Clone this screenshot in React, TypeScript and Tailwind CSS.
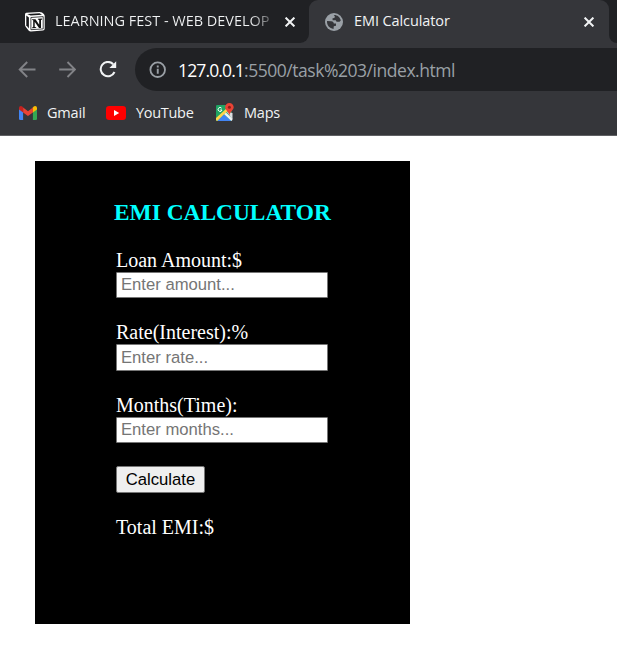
import React from "react";

function NotionIcon() {
  return (
    <svg width="22" height="22" viewBox="0 0 22 22" className="shrink-0">
      <path d="M2.3 1.8 L15.5 .9 Q17 .9 18 1.6 L19.8 3 Q20.7 3.8 20.7 5 V17.6 Q20.7 19.4 18.9 19.6 L7 20.5 Q5.6 20.6 4.8 19.7 L2 16.3 Q1 15.2 1 13.8 V3.5 Q1 2 2.3 1.8Z" fill="#fff" />
      <path d="M3.2 3 L15.6 2.2 L18 3.7 L6.6 4.5Z" fill="#17181b" />
      <path d="M2.3 4.4 L4.9 6.4 V17.4 L2.3 14.2Z" fill="#17181b" />
      <path d="M6.9 6.5 L19.2 5.6 V17.9 L6.9 18.7Z" fill="#fff" stroke="#17181b" strokeWidth=".8" />
      <path d="M8.1 8.2 h3.4 l3.7 5.6 V9 l-1.3-.4 V7.8 l4.2-.2 v.9 l-1.1.4 V17 h-2 l-4.3-6.3 v5.2 l1.5.4 v.8 l-4.1.2 v-.9 l1.1-.4 V9.3 l-1.1-.3Z" fill="#111" />
    </svg>
  );
}

function GlobeIcon() {
  return (
    <svg width="18" height="18" viewBox="0 0 18 18" className="shrink-0">
      <circle cx="9" cy="9" r="9" fill="#9aa0a6" />
      <path d="M8.8 2 C12.2 1.8 15 4 15.8 7.4 L14.5 8.8 L11.6 8.7 L10.7 7.3 L7.7 7.2 L7.4 5.4 L9.6 4.7 L9.8 3.3Z M2 8.1 L6.3 8.2 C8 8.3 8.7 9.2 8.8 10.5 H11 V12.8 L8.8 13.3 L8.5 15.9 C4.6 15.8 1.7 12.2 2 8.1Z" fill="#35363a" />
    </svg>
  );
}

function CloseIcon() {
  return (
    <svg width="10" height="10" viewBox="0 0 10 10" className="shrink-0">
      <path d="M.6 .6 L9.4 9.4 M9.4 .6 L.6 9.4" stroke="#f1f3f4" strokeWidth="2" />
    </svg>
  );
}

function BackIcon() {
  return (
    <svg width="18" height="18" viewBox="0 0 18 18">
      <path d="M17.5 8.5 H2 M9.2 1 L1.7 8.5 L9.2 16" fill="none" stroke="#828387" strokeWidth="1.9" />
    </svg>
  );
}

function ForwardIcon() {
  return (
    <svg width="18" height="18" viewBox="0 0 18 18">
      <path d="M1.2 8.5 H16.7 M9.5 1 L17 8.5 L9.5 16" fill="none" stroke="#828387" strokeWidth="1.9" />
    </svg>
  );
}

function ReloadIcon() {
  return (
    <svg width="18" height="18" viewBox="0 0 18 18">
      <path d="M15.5 11 A7.2 7.2 0 1 1 14.2 3.2" fill="none" stroke="#f1f3f4" strokeWidth="2" />
      <path d="M17.2 .3 V7.1 H10.4Z" fill="#f1f3f4" />
    </svg>
  );
}

function InfoIcon() {
  return (
    <svg width="18" height="18" viewBox="0 0 18 18">
      <circle cx="8.7" cy="8.7" r="7.3" fill="none" stroke="#9aa0a6" strokeWidth="1.8" />
      <path d="M7.8 7.8 h1.9 v5 h-1.9Z M7.8 4.6 h1.9 v1.9 h-1.9Z" fill="#9aa0a6" />
    </svg>
  );
}

function GmailIcon() {
  return (
    <svg width="18" height="14" viewBox="0 0 18 14">
      <path d="M0 2.2 L4.1 5 V14 H1.3 Q0 14 0 12.7Z" fill="#4285f4" />
      <path d="M18 2.2 L13.9 5 V14 H16.7 Q18 14 18 12.7Z" fill="#34a853" />
      <path d="M4.1 1.5 L9 5.2 L13.9 1.5 V6.4 L9 10.1 L4.1 6.4Z" fill="#ea4335" />
      <path d="M0 2 Q0 0 1.9 0 Q2.6 0 3.3 .6 L4.1 1.5 V6.4 L0 3.4Z" fill="#c5221f" />
      <path d="M18 2 Q18 0 16.1 0 Q15.4 0 14.7 .6 L13.9 1.5 V6.4 L18 3.4Z" fill="#fbbc04" />
    </svg>
  );
}

function YouTubeIcon() {
  return (
    <svg width="20" height="14" viewBox="0 0 20 14">
      <rect width="20" height="14" rx="3.2" fill="#f00" />
      <path d="M8 4 L13.2 7 L8 10Z" fill="#fff" />
    </svg>
  );
}

function MapsIcon() {
  return (
    <svg width="18" height="19" viewBox="0 0 18 19">
      <path d="M1.2 2 H15.5 V18 H1.2 Q0 18 0 16.8 V3.2 Q0 2 1.2 2Z" fill="#1fa463" />
      <path d="M10.5 8.5 L16.5 10 V16.5Z" fill="#dadce0" />
      <path d="M0 15 L11 5 L12.8 7 L1.4 18 Q0 18 0 16.8Z" fill="#ffd54b" />
      <path d="M8.2 11.2 L15.4 18 H1.4Z" fill="#4285f4" />
      <path d="M8.2 11.2 L10 9.5 L16.4 15.8 V17 L15.4 18Z" fill="#f1f3f4" />
      <path d="M5.6 5.2 A2 2 0 1 0 6 7 H4.2" fill="none" stroke="#fff" strokeWidth="1" />
      <path d="M13.4 0 A4.3 4.3 0 0 1 17.7 4.3 C17.7 7 14 8.5 13.4 12.8 C12.8 8.5 9.1 7 9.1 4.3 A4.3 4.3 0 0 1 13.4 0Z" fill="#e94335" />
      <circle cx="13.4" cy="4.3" r="1.5" fill="#8c1d18" />
    </svg>
  );
}

function Field({ label, hint, tall }: { label: string; hint: string; tall?: boolean }) {
  return (
    <div className="flex flex-col">
      <label className="h-[23px] text-[20px] leading-[23px] whitespace-nowrap text-white">{label}</label>
      <input
        placeholder={hint}
        className={
          "w-[212px] rounded-[1px] border border-[#767676] bg-white px-[4px] font-['Liberation_Sans',Arial,sans-serif] text-[16.67px] leading-[20px] text-black placeholder:text-[#757575] " +
          (tall ? "h-[27px]" : "h-[26px]")
        }
      />
    </div>
  );
}

export default function App() {
  return (
    <div className="flex h-[657px] w-[617px] flex-col overflow-hidden bg-white font-['Open_Sans','Noto_Sans',sans-serif]">
      <div className="flex h-[43px] bg-[#202124] text-[14.5px] leading-[18px] text-[#f1f3f4]">
        <div className="h-[43px] w-[309px] bg-[#35363a]">
          <div className="flex h-[43px] items-center rounded-br-[9px] bg-[#202124] pl-[24px]">
            <NotionIcon />
            <span className="ml-[9px] w-[217px] bg-linear-to-r from-[#f1f3f4] from-90% to-[#f1f3f4]/25 bg-clip-text pb-[2px] tracking-[-0.02px] whitespace-nowrap text-transparent">
              LEARNING FEST - WEB DEVELOP
            </span>
            <span className="ml-[13px]"><CloseIcon /></span>
          </div>
        </div>
        <div className="flex h-[43px] w-[300px] items-center rounded-t-[9px] bg-[#35363a] pl-[16px]">
          <GlobeIcon />
          <span className="ml-[11px] pb-[2px] tracking-[-0.1px] whitespace-nowrap">EMI Calculator</span>
          <span className="mr-[15px] ml-auto"><CloseIcon /></span>
        </div>
        <div className="h-[43px] flex-1 bg-[#35363a]">
          <div className="h-[10px] bg-[#202124]" />
          <div className="h-[33px] rounded-bl-[9px] bg-[#202124]" />
        </div>
      </div>

      <div className="flex h-[53px] items-center bg-[#35363a] pl-[18px]">
        <BackIcon />
        <span className="ml-[22px]"><ForwardIcon /></span>
        <span className="ml-[23px]"><ReloadIcon /></span>
        <div className="ml-[18px] flex h-[43px] flex-1 items-center rounded-l-full bg-[#202124] pl-[14px]">
          <InfoIcon />
          <span className="ml-[11px] text-[17.5px] leading-[24px] tracking-[-0.46px] whitespace-nowrap text-[#9aa0a6]">
            <span className="tracking-[-0.87px] text-white">127.0.0.1</span>:5500/task%203/index.html
          </span>
        </div>
      </div>

      <div className="flex h-[40px] items-center border-b border-[#5f6063] bg-[#35363a] pb-[6px] pl-[19px] text-[14.5px] leading-[20px] text-[#f1f3f4]">
        <GmailIcon />
        <span className="ml-[10px] w-[59px] tracking-[-0.2px]">Gmail</span>
        <YouTubeIcon />
        <span className="ml-[10px] w-[80px] tracking-[-0.3px]">YouTube</span>
        <MapsIcon />
        <span className="ml-[10px] tracking-[-0.2px]">Maps</span>
      </div>

      <main className="mt-[25px] ml-[35px] flex h-[463px] w-[375px] flex-col bg-black pt-[38px] pl-[81px] font-['Liberation_Serif','Times_New_Roman',serif] text-white">
        <h1 className="-ml-[2px] h-[26px] text-[23.4px] leading-[26px] font-bold whitespace-nowrap text-[#00ffff]">EMI CALCULATOR</h1>
        <div className="mt-[24px] flex flex-col gap-[23px]">
          <Field label="Loan Amount:$" hint="Enter amount..." />
          <Field label="Rate(Interest):%" hint="Enter rate..." tall />
          <Field label="Months(Time):" hint="Enter months..." />
        </div>
        <button className="mt-[23px] h-[27px] w-[89px] rounded-[2px] border border-[#767676] bg-[#efefef] font-['Liberation_Sans',Arial,sans-serif] text-[16.67px] leading-[20px] text-black">
          Calculate
        </button>
        <p className="mt-[23px] text-[20px] leading-[23px]">Total EMI:$</p>
      </main>
    </div>
  );
}
